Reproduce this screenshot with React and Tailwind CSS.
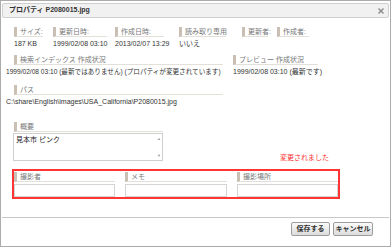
const font = "font-['Liberation_Sans','Noto_Sans_CJK_JP',sans-serif]";

function Label({ children, className = "" }) {
  return (
    <div className={`h-[10px] border-l-[3px] border-b border-l-[#c9bfb2] border-b-[#e3dfd9] pl-[3px] text-[7px] leading-[9px] text-[#777] whitespace-nowrap ${className}`}>
      {children}
    </div>
  );
}

export default function App() {
  const row1 = [
    { label: "サイズ:", value: "187 KB", col: "w-[39px]", lw: "w-[29px]" },
    { label: "更新日時:", value: "1999/02/08 03:10", col: "w-[62px]", lw: "w-[54px]" },
    { label: "作成日時:", value: "2013/02/07 13:29", col: "w-[64px]", lw: "w-[49px]" },
    { label: "読み取り専用", value: "いいえ", col: "w-[63px]", lw: "w-[47px]" },
    { label: "更新者:", value: "", col: "w-[35px]", lw: "w-[26px]" },
    { label: "作成者:", value: "", col: "w-[32px]", lw: "w-[32px]" },
  ];

  const fields = [
    { label: "撮影者", w: "w-[102px]" },
    { label: "メモ", w: "w-[103px]" },
    { label: "撮影場所", w: "w-[102px]" },
  ];

  return (
    <div className={`w-[392px] h-[248px] bg-white ${font}`}>
      <div className="w-[391px] h-[247px] border border-[#ababab] bg-white flex flex-col">
        <div className="mx-[1px] mt-[2px] h-[15px] border border-[#cfcfcf] rounded-[2px] bg-[#f1f1f1] flex items-center justify-between pl-[6px] pr-[4px]">
          <span className="text-[7px] font-bold text-[#333]">プロパティ P2080015.jpg</span>
          <svg width="6" height="6" viewBox="0 0 6 6">
            <path d="M0.5 0.5L5.5 5.5M5.5 0.5L0.5 5.5" stroke="#8a8a8a" strokeWidth="1.4" />
          </svg>
        </div>

        <div className="pl-[13px] flex flex-col">
          <div className="flex mt-[9px]">
            {row1.map((c) => (
              <div key={c.label} className={`${c.col} flex flex-col`}>
                <Label className={c.lw}>{c.label}</Label>
                <div className="h-[10px] mt-[2px] text-[7px] leading-[10px] text-[#333] whitespace-nowrap">{c.value}</div>
              </div>
            ))}
          </div>

          <div className="flex mt-[6px]">
            <div className="w-[219px] flex flex-col">
              <Label className="w-[209px]">検索インデックス 作成状況</Label>
              <div className="-ml-[8px] mt-[2px] h-[10px] text-[6.6px] leading-[10px] text-[#333] whitespace-nowrap">
                1999/02/08 03:10 (最新ではありません) (プロパティが変更されています)
              </div>
            </div>
            <div className="w-[85px] flex flex-col">
              <Label className="w-[85px]">プレビュー 作成状況</Label>
              <div className="mt-[2px] h-[10px] text-[7px] leading-[10px] text-[#333] whitespace-nowrap">
                1999/02/08 03:10 (最新です)
              </div>
            </div>
          </div>

          <div className="flex flex-col mt-[8px]">
            <Label className="w-[209px]">パス</Label>
            <div className="-ml-[8px] mt-[2px] h-[10px] text-[7px] leading-[10px] text-[#333] whitespace-nowrap">
              C:\share\English\images\USA_California\P2080015.jpg
            </div>
          </div>

          <div className="flex flex-col mt-[15px]">
            <Label className="w-[149px]">概要</Label>
            <div className="flex items-end">
              <div className="-ml-[1px] mt-[1px] w-[150px] h-[28px] border border-[#cfcfcf] flex justify-between pl-[2px] pr-[1px] py-[1px]">
                <span className="text-[7px] leading-[9px] text-[#222]">見本市 ピンク</span>
                <div className="flex flex-col justify-between text-[#999] text-[4px] leading-[5px] py-[1px]">
                  <span>▲</span>
                  <span>▼</span>
                </div>
              </div>
              <div className="ml-[117px] mb-[-2px] text-[7px] leading-[10px] text-[#ff3030]">変更されました</div>
            </div>
          </div>

          <div className="-ml-[2px] mt-[8px] w-[328px] h-[30px] border-2 border-[#ff3535] flex gap-[10px] pt-[1px]">
            {fields.map((f) => (
              <div key={f.label} className={`${f.w} flex flex-col`}>
                <Label>{f.label}</Label>
                <div className="mt-[2px] h-[14px] border border-[#d4d4d4] bg-white" />
              </div>
            ))}
          </div>
        </div>

        <div className="mt-[18px] mx-[1px] border-t border-[#c8c8c8]" />

        <div className="flex justify-end gap-[3px] mt-[4px] pr-[17px]">
          <button className="w-[39px] h-[14px] border border-[#9c9c9c] rounded-[2px] bg-gradient-to-b from-[#fafafa] to-[#dcdcdc] text-[7px] font-bold text-[#333] leading-[12px]">
            保存する
          </button>
          <button className="w-[40px] h-[14px] border border-[#9c9c9c] rounded-[2px] bg-gradient-to-b from-[#fafafa] to-[#dcdcdc] text-[7px] font-bold text-[#333] leading-[12px]">
            キャンセル
          </button>
        </div>
      </div>
    </div>
  );
}
